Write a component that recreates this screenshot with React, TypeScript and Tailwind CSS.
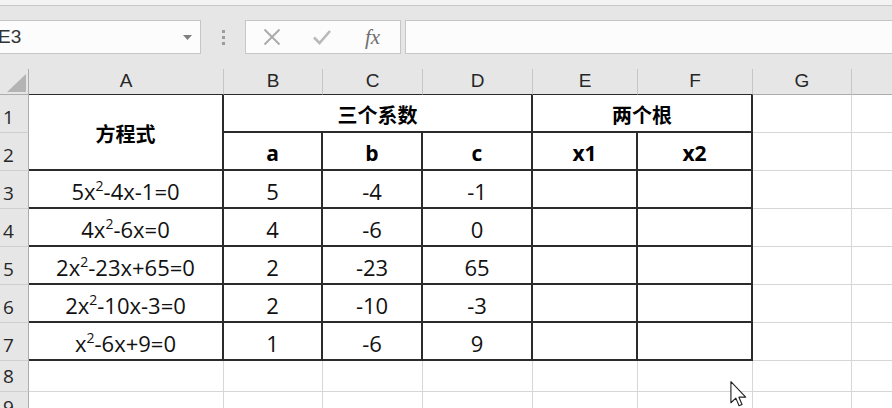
import React from 'react';

const cellFont = { fontFamily: '"Open Sans", "Noto Sans CJK SC", sans-serif' };

const Sq = ({ pre, post }: { pre: string; post: string }) => (
  <span className="whitespace-nowrap">
    {pre}x<sup className="text-[14px] top-[-0.62em]">2</sup>
    {post}
  </span>
);

const rows: { eq: React.ReactNode; a: string; b: string; c: string }[] = [
  { eq: <Sq pre="5" post="-4x-1=0" />, a: '5', b: '-4', c: '-1' },
  { eq: <Sq pre="4" post="-6x=0" />, a: '4', b: '-6', c: '0' },
  { eq: <Sq pre="2" post="-23x+65=0" />, a: '2', b: '-23', c: '65' },
  { eq: <Sq pre="2" post="-10x-3=0" />, a: '2', b: '-10', c: '-3' },
  { eq: <Sq pre="" post="-6x+9=0" />, a: '1', b: '-6', c: '9' },
];

const letters = ['A', 'B', 'C', 'D', 'E', 'F', 'G', ''];

// black-bordered table cell
const T = 'flex items-center justify-center pt-[5px] border-r-2 border-b-2 border-[#2b2b2b] bg-white';
// plain grid cell
const G = 'border-r border-b border-[#d6d6d6] bg-white';
const RowHead = ({ n }: { n: number }) => (
  <div className="flex items-end pl-[3px] pb-[5px] bg-[#e6e6e6] border-r border-b border-r-[#acacac] border-b-[#cfcfcf] text-[19px] leading-none text-[#262626]">
    {n}
  </div>
);

export default function App() {
  return (
    <div className="w-[892px] h-[408px] overflow-hidden bg-white relative" style={{ fontFamily: '"Liberation Sans", Arial, sans-serif' }}>
      {/* top strip */}
      <div className="h-[6px] bg-[#f3f3f3] border-b border-[#c9c9c9]" />

      {/* formula toolbar */}
      <div className="h-[63px] bg-[#e6e6e6] pt-[14px] flex items-start">
        <div className="w-[201px] h-[34px] bg-[#fcfcfc] border border-l-0 border-[#c6c6c6] flex items-center justify-between pr-[8px]">
          <span className="text-[19px] text-[#333] ml-[-2px]">E3</span>
          <svg width="9" height="5" viewBox="0 0 9 5"><path d="M0 0h9L4.5 5z" fill="#7f7f7f" /></svg>
        </div>
        <div className="w-[44px] h-[34px] flex flex-col items-center justify-center gap-[3px]">
          <div className="w-[3px] h-[3px] bg-[#9c9c9c]" />
          <div className="w-[3px] h-[3px] bg-[#9c9c9c]" />
          <div className="w-[3px] h-[3px] bg-[#9c9c9c]" />
        </div>
        <div className="w-[156px] h-[34px] bg-[#fcfcfc] border border-[#c6c6c6] flex items-center">
          <svg className="ml-[17px]" width="18" height="18" viewBox="0 0 18 18">
            <path d="M1.5 1.5L16.5 16.5M16.5 1.5L1.5 16.5" stroke="#a9a9a9" strokeWidth="1.8" />
          </svg>
          <svg className="ml-[32px]" width="18" height="16" viewBox="0 0 18 16">
            <path d="M1 8.5L6.5 14L17 2" stroke="#b9b9b9" strokeWidth="2.6" fill="none" />
          </svg>
          <span className="ml-[34px] text-[21px] italic text-[#6e6e6e] leading-none" style={{ fontFamily: '"Liberation Serif", serif' }}>
            fx
          </span>
        </div>
        <div className="ml-[4px] flex-1 h-[34px] bg-[#fcfcfc] border border-r-0 border-[#c6c6c6]" />
      </div>

      {/* sheet */}
      <div className="grid grid-cols-[29px_195px_99px_100px_110px_105px_115px_99px_1fr] grid-rows-[26px_repeat(7,38px)_31px_31px]" style={cellFont}>
        {/* column headers */}
        <div className="bg-[#e6e6e6] border-r border-b border-r-[#acacac] border-b-[#acacac] relative">
          <svg className="absolute left-[7px] top-[5px]" width="19" height="18" viewBox="0 0 19 18">
            <path d="M19 0V18H0z" fill="#b4b4b4" />
          </svg>
        </div>
        {letters.map((l, i) => (
          <div
            key={i}
            className={`bg-[#e6e6e6] flex items-center justify-center text-[19px] text-[#262626] border-b ${
              i < 6 ? 'border-b-[#2b2b2b]' : 'border-b-[#acacac]'
            } ${i < 7 ? 'border-r border-r-[#c6c6c6]' : ''}`}
            style={{ fontFamily: '"Liberation Sans", Arial, sans-serif' }}
          >
            {l}
          </div>
        ))}

        {/* row 1 */}
        <RowHead n={1} />
        <div className={`${T} row-span-2 font-bold text-[20px]`}>方程式</div>
        <div className={`${T} col-span-3 font-bold text-[20px]`}>三个系数</div>
        <div className={`${T} col-span-2 font-bold text-[20px]`}>两个根</div>
        <div className={G} />
        <div className="border-b border-[#d6d6d6]" />

        {/* row 2 */}
        <RowHead n={2} />
        {['a', 'b', 'c', 'x1', 'x2'].map((h) => (
          <div key={h} className={`${T} font-bold text-[21px]`}>
            {h}
          </div>
        ))}
        <div className={G} />
        <div className="border-b border-[#d6d6d6]" />

        {/* data rows */}
        {rows.map((r, i) => (
          <React.Fragment key={i}>
            <RowHead n={i + 3} />
            <div className={`${T} text-[22px] text-[#111]`}>{r.eq}</div>
            <div className={`${T} text-[22px] text-[#111]`}>{r.a}</div>
            <div className={`${T} text-[22px] text-[#111]`}>{r.b}</div>
            <div className={`${T} text-[22px] text-[#111]`}>{r.c}</div>
            <div className={T} />
            <div className={T} />
            <div className={G} />
            <div className="border-b border-[#d6d6d6]" />
          </React.Fragment>
        ))}

        {/* empty rows */}
        {[8, 9].map((n) => (
          <React.Fragment key={n}>
            <RowHead n={n} />
            {[0, 1, 2, 3, 4, 5, 6].map((k) => (
              <div key={k} className={G} />
            ))}
            <div className="border-b border-[#d6d6d6]" />
          </React.Fragment>
        ))}
      </div>

      {/* mouse pointer */}
      <svg className="absolute left-[730px] top-[381px]" width="18" height="26" viewBox="0 0 12.5 18.5">
        <path d="M0.5 0.5V15.5L4 12.2L6.3 17.6L8.4 16.7L6.2 11.5H11z" fill="#fff" stroke="#222" strokeWidth="0.8" strokeLinejoin="round" />
      </svg>
    </div>
  );
}
